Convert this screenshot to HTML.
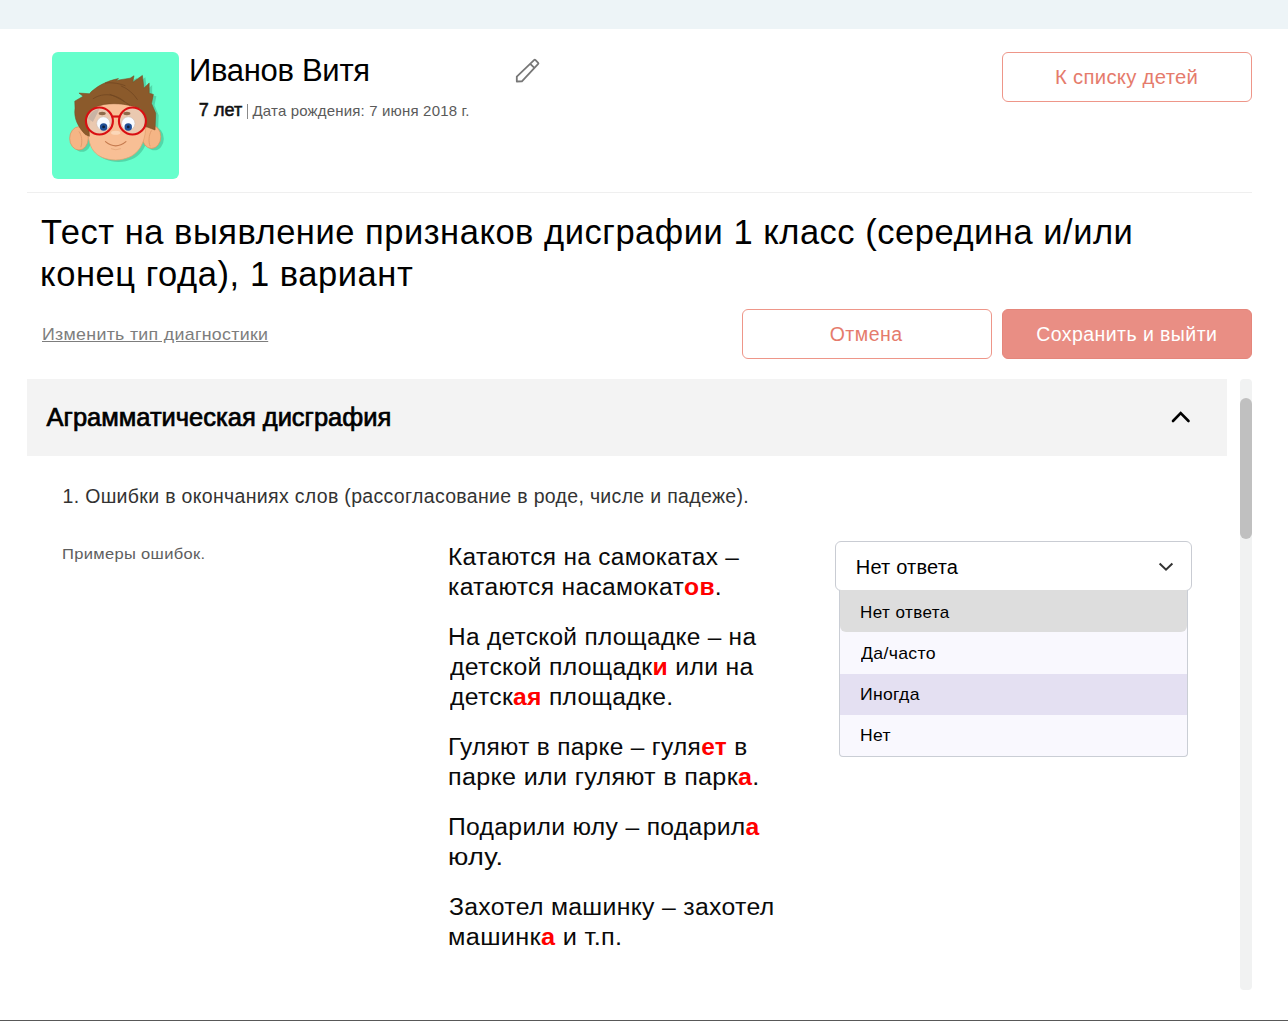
<!DOCTYPE html>
<html><head><meta charset="utf-8">
<style>
*{margin:0;padding:0;box-sizing:border-box}
html,body{width:1288px;height:1021px;overflow:hidden;background:#fff;font-family:"Liberation Sans",sans-serif;color:#000}
.abs{position:absolute}
.t{position:absolute;white-space:nowrap}
.t b{color:#f00;font-weight:bold}
.topbar{left:0;top:0;width:1288px;height:29px;background:#edf4f7}
.avatar{left:52px;top:52px;width:127px;height:127px;background:#66ffcc;border-radius:6px}
.btn{border:1px solid #ee9689;border-radius:6px;background:#fff}
.hr1{left:27px;top:192px;width:1225px;height:1px;background:#efefef}
.sechead{left:27px;top:379px;width:1200px;height:77px;background:#f3f3f3}
.track{left:1240px;top:379px;width:12px;height:611px;background:#f1f2f2;border-radius:4px}
.thumb{left:1240px;top:398px;width:12px;height:141px;background:#c0c0c0;border-radius:6px}
.select{left:835px;top:541px;width:357px;height:50px;border:1px solid #c9ccd3;border-radius:6px;background:#fff}
.dd{left:839px;top:590px;width:349px;height:167px;border:1px solid #caced5;border-top:none;border-radius:0 0 4px 4px;background:#f9f8fe;overflow:hidden}
.item{position:absolute;left:0;width:347px;height:41.25px}
.bottom{left:0;top:1020px;width:1288px;height:1px;background:#585858}
</style></head><body>
<div class="abs topbar"></div>
<div class="abs avatar"></div>
<svg class="abs" style="left:65px;top:70px" width="100" height="95" viewBox="0 0 1075 1021">
<defs>
<ellipse id="earL" cx="150" cy="735" rx="100" ry="125"/>
<ellipse id="earR" cx="930" cy="718" rx="100" ry="125"/>
<path id="face" d="M250 560 C225 850 330 960 545 968 C760 960 872 830 870 560 C860 400 700 330 545 330 C380 330 265 400 250 560 Z"/>
<path id="hair" d="M105 335 L195 282 L150 248 L262 255 C330 180 450 115 575 92 L548 112 L700 88 L742 62 L728 132 L832 58 L848 195 L905 140 L905 250 L950 262 L930 360 L975 465 L968 645 L862 605 L820 420 C700 370 560 350 420 370 L330 395 C290 470 250 560 262 712 L218 694 C140 610 92 520 108 410 Z"/>
</defs>
<g fill="#52d7a9" transform="translate(32,20)"><use href="#earL"/><use href="#earR"/><use href="#face"/><use href="#hair"/></g>
<g fill="#f5b585" stroke="#d99363" stroke-width="8"><use href="#earL"/><use href="#earR"/></g>
<path d="M150 660 C180 700 190 770 170 830" fill="none" stroke="#e09a6c" stroke-width="10"/>
<path d="M930 650 C900 700 895 770 915 820" fill="none" stroke="#e09a6c" stroke-width="10"/>
<use href="#face" fill="#f8bf95" stroke="#e3a070" stroke-width="8"/>
<use href="#hair" fill="#8b5a2b" stroke="#7a4a20" stroke-width="6"/>
<path d="M300 310 C420 230 560 270 640 340 M480 260 C560 290 640 340 700 380 M600 170 C680 200 740 260 780 320 M430 140 C520 130 600 150 650 170" fill="none" stroke="#6e4520" stroke-width="8"/>
<g fill="#e9cbb3" opacity="0.9"><circle cx="370" cy="548" r="140"/><circle cx="725" cy="548" r="140"/></g>
<path d="M250 520 C280 450 330 420 370 420 L300 560 Z" fill="#c9b3a4"/>
<g fill="#8e6a4a"><ellipse cx="400" cy="468" rx="38" ry="18"/><ellipse cx="665" cy="468" rx="38" ry="18"/></g>
<g fill="#f8fbff" stroke="#c9b8ad" stroke-width="6"><circle cx="412" cy="575" r="72"/><circle cx="680" cy="575" r="72"/></g>
<g fill="#1f4f96"><circle cx="415" cy="612" r="40"/><circle cx="680" cy="612" r="40"/></g>
<g fill="#0d1f3a"><circle cx="415" cy="612" r="15"/><circle cx="680" cy="612" r="15"/></g>
<g fill="none" stroke="#d90f12" stroke-width="23"><circle cx="370" cy="548" r="145"/><circle cx="725" cy="548" r="145"/><path d="M510 500 L585 500"/></g>
<ellipse cx="545" cy="675" rx="50" ry="22" fill="#fbd7b8"/>
<path d="M435 770 Q545 860 655 770" fill="none" stroke="#c57a4e" stroke-width="12" stroke-linecap="round"/>
<path d="M495 845 Q545 870 600 845" fill="none" stroke="#e3a678" stroke-width="8"/>
</svg>
<svg class="abs" style="left:510px;top:54px" width="32" height="32" viewBox="0 0 32 32"><path d="M6.8 22.7 L24.3 5.9 Q24.8 5.4 25.3 5.9 L28.2 8.8 Q28.7 9.3 28.2 9.8 L11.9 27.4 L6.8 27.5 Z M20.3 9.9 L24.6 14.2" fill="none" stroke="#777" stroke-width="1.8" stroke-linejoin="round"/></svg>
<div class="abs" style="left:246.5px;top:104px;width:1.2px;height:14.5px;background:#8a8a8a"></div>
<div class="abs btn" style="left:1002px;top:52px;width:250px;height:50px"></div>
<div class="abs hr1"></div>
<div class="abs btn" style="left:742px;top:309px;width:250px;height:50px"></div>
<div class="abs btn" style="left:1002px;top:309px;width:250px;height:50px;background:#e98e84;border-color:#e5867b"></div>
<div class="abs sechead"></div>
<svg class="abs" style="left:1160px;top:400px" width="40" height="30" viewBox="0 0 40 30"><path d="M13 21 L20.7 13.2 L28.5 21" fill="none" stroke="#000" stroke-width="2.6" stroke-linecap="round" stroke-linejoin="miter"/></svg>
<div class="abs track"></div>
<div class="abs thumb"></div>
<div class="abs select"></div>
<svg class="abs" style="left:1150px;top:555px" width="30" height="24" viewBox="0 0 30 24"><path d="M9.6 8.5 L16 14.6 L22.4 8.5" fill="none" stroke="#333" stroke-width="2"/></svg>
<div class="abs dd">
<div class="item" style="top:0;height:42px;background:#dddddd;border-radius:0 0 6px 6px"></div>
<div class="item" style="top:83.7px;height:41.1px;background:#e4e0f2"></div>
</div>
<div class="abs bottom"></div>
<div class="t" style="left:189.0px;top:48.0px;font-size:31px;line-height:46.5px;letter-spacing:-0.3px;font-weight:normal;;color:#000">Иванов Витя</div>
<div class="t" style="left:198.7px;top:97.0px;font-size:18px;line-height:27.0px;letter-spacing:0.1px;font-weight:normal;-webkit-text-stroke:0.55px #111;color:#111">7 лет</div>
<div class="t" style="left:252.5px;top:100.0px;font-size:15px;line-height:22.5px;letter-spacing:0.171px;font-weight:normal;;color:#5a5a5a">Дата рождения: 7 июня 2018 г.</div>
<div class="t" style="left:1055.3px;top:62.7px;font-size:19.5px;line-height:29.25px;letter-spacing:0.3px;font-weight:normal;;color:#e57b6c;transform:scaleX(1.0388);transform-origin:0 0">К списку детей</div>
<div class="t" style="left:41.1px;top:207.0px;font-size:34.5px;line-height:51.75px;letter-spacing:0.523px;font-weight:normal;;color:#000">Тест на выявление признаков дисграфии 1 класс (середина и/или</div>
<div class="t" style="left:40.1px;top:249.0px;font-size:34.5px;line-height:51.75px;letter-spacing:0.562px;font-weight:normal;;color:#000">конец года), 1 вариант</div>
<div class="t" style="left:42.2px;top:322.2px;font-size:17px;line-height:25.5px;letter-spacing:0.3px;font-weight:normal;;color:#7d7d7d;text-decoration:underline;text-underline-offset:1px;transform:scaleX(1.0451);transform-origin:0 0">Изменить тип диагностики</div>
<div class="t" style="left:829.7px;top:319.7px;font-size:19.5px;line-height:29.25px;letter-spacing:0.48px;font-weight:normal;;color:#e57b6c">Отмена</div>
<div class="t" style="left:1036.2px;top:319.7px;font-size:19.5px;line-height:29.25px;letter-spacing:0.438px;font-weight:normal;;color:#fff">Сохранить и выйти</div>
<div class="t" style="left:46.6px;top:398.1px;font-size:25.5px;line-height:38.25px;letter-spacing:-0.008px;font-weight:normal;-webkit-text-stroke:0.7px #000;color:#000">Аграмматическая дисграфия</div>
<div class="t" style="left:62.5px;top:482.0px;font-size:19.5px;line-height:29.25px;letter-spacing:0.324px;font-weight:normal;;color:#333">1. Ошибки в окончаниях слов (рассогласование в роде, числе и падеже).</div>
<div class="t" style="left:61.8px;top:542.9px;font-size:15px;line-height:22.5px;letter-spacing:0.3px;font-weight:normal;;color:#5e5e5e;transform:scaleX(1.1008);transform-origin:0 0">Примеры ошибок.</div>
<div class="t" style="left:448.1px;top:539.8px;font-size:23.5px;line-height:35.25px;letter-spacing:0.3px;font-weight:normal;;color:#0a0a0a;transform:scaleX(1.039);transform-origin:0 0">Катаются на самокатах –</div>
<div class="t" style="left:448.1px;top:569.8px;font-size:23.5px;line-height:35.25px;letter-spacing:0.3px;font-weight:normal;;color:#0a0a0a;transform:scaleX(1.0483);transform-origin:0 0">катаются насамокат<b>ов</b>.</div>
<div class="t" style="left:448.1px;top:619.8px;font-size:23.5px;line-height:35.25px;letter-spacing:0.3px;font-weight:normal;;color:#0a0a0a;transform:scaleX(1.0381);transform-origin:0 0">На детской площадке – на</div>
<div class="t" style="left:450.1px;top:649.8px;font-size:23.5px;line-height:35.25px;letter-spacing:0.3px;font-weight:normal;;color:#0a0a0a;transform:scaleX(1.0537);transform-origin:0 0">детской площадк<b>и</b> или на</div>
<div class="t" style="left:450.1px;top:679.8px;font-size:23.5px;line-height:35.25px;letter-spacing:0.3px;font-weight:normal;;color:#0a0a0a;transform:scaleX(1.0495);transform-origin:0 0">детск<b>ая</b> площадке.</div>
<div class="t" style="left:448.1px;top:729.8px;font-size:23.5px;line-height:35.25px;letter-spacing:0.3px;font-weight:normal;;color:#0a0a0a;transform:scaleX(1.0401);transform-origin:0 0">Гуляют в парке – гуля<b>ет</b> в</div>
<div class="t" style="left:448.1px;top:759.8px;font-size:23.5px;line-height:35.25px;letter-spacing:0.3px;font-weight:normal;;color:#0a0a0a;transform:scaleX(1.0692);transform-origin:0 0">парке или гуляют в парк<b>а</b>.</div>
<div class="t" style="left:448.1px;top:809.8px;font-size:23.5px;line-height:35.25px;letter-spacing:0.3px;font-weight:normal;;color:#0a0a0a;transform:scaleX(1.0512);transform-origin:0 0">Подарили юлу – подарил<b>а</b></div>
<div class="t" style="left:448.1px;top:839.8px;font-size:23.5px;line-height:35.25px;letter-spacing:0.3px;font-weight:normal;;color:#0a0a0a;transform:scaleX(1.1535);transform-origin:0 0">юлу.</div>
<div class="t" style="left:449.1px;top:889.8px;font-size:23.5px;line-height:35.25px;letter-spacing:0.3px;font-weight:normal;;color:#0a0a0a;transform:scaleX(1.0538);transform-origin:0 0">Захотел машинку – захотел</div>
<div class="t" style="left:448.1px;top:919.8px;font-size:23.5px;line-height:35.25px;letter-spacing:0.3px;font-weight:normal;;color:#0a0a0a;transform:scaleX(1.0777);transform-origin:0 0">машинк<b>а</b> и т.п.</div>
<div class="t" style="left:855.8px;top:552.0px;font-size:20px;line-height:30.0px;letter-spacing:0.2px;font-weight:normal;;color:#000">Нет ответа</div>
<div class="t" style="left:860.0px;top:600.0px;font-size:17px;line-height:25.5px;letter-spacing:0.444px;font-weight:normal;;color:#000">Нет ответа</div>
<div class="t" style="left:860.5px;top:640.8px;font-size:17px;line-height:25.5px;letter-spacing:0.3px;font-weight:normal;;color:#000;transform:scaleX(1.0401);transform-origin:0 0">Да/часто</div>
<div class="t" style="left:860.0px;top:681.8px;font-size:17px;line-height:25.5px;letter-spacing:0.3px;font-weight:normal;;color:#000;transform:scaleX(1.0359);transform-origin:0 0">Иногда</div>
<div class="t" style="left:860.0px;top:722.9px;font-size:17px;line-height:25.5px;letter-spacing:0.3px;font-weight:normal;;color:#000;transform:scaleX(1.0303);transform-origin:0 0">Нет</div>
</body></html>
